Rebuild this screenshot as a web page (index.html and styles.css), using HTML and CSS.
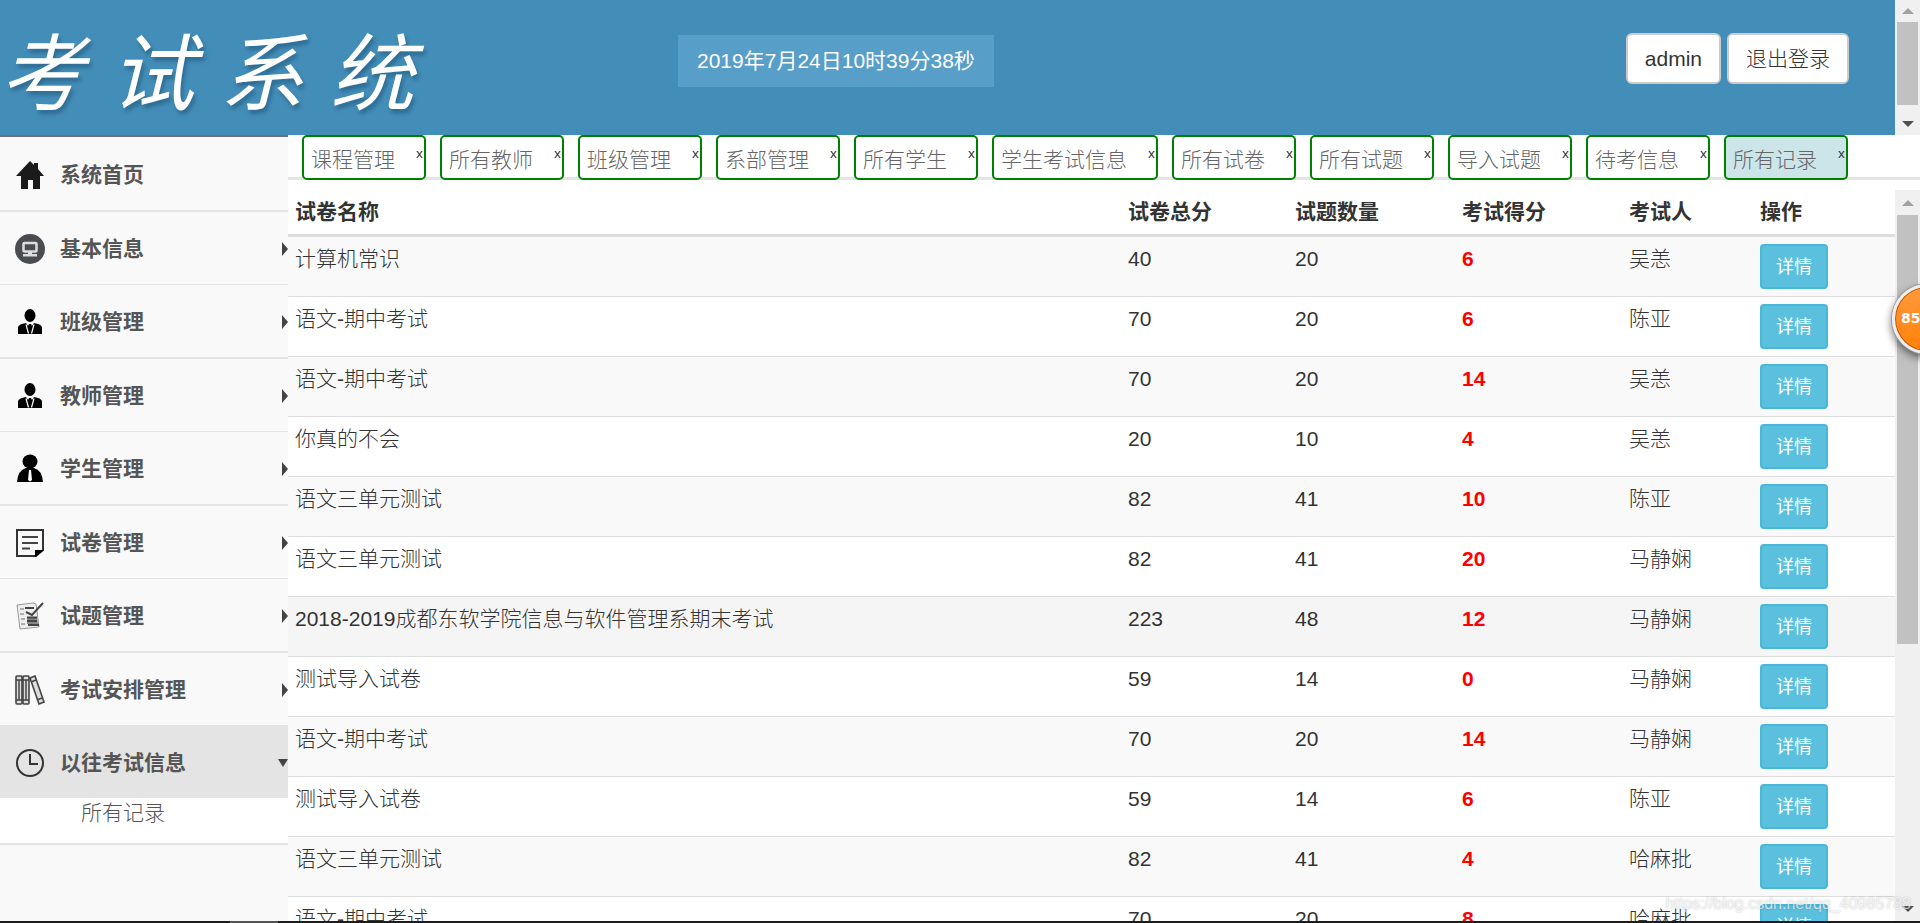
FILE: index.html
```html
<!DOCTYPE html>
<html lang="zh-CN">
<head>
<meta charset="utf-8">
<title>考试系统</title>
<link rel="stylesheet" href="styles.css">
</head>
<body>
<div class="app">
  <header class="header">
    <div class="banner">
      <h1 class="logo"><span>考</span><span>试</span><span>系</span><span>统</span></h1>
      <div class="clock">2019年7月24日10时39分38秒</div>
      <div class="account">
        <button class="btn-plain" type="button">admin</button>
        <button class="btn-plain" type="button">退出登录</button>
      </div>
    </div>
    <div class="scrollbar" aria-hidden="true">
      <span class="sb-arrow sb-up sb-off"></span>
      <span class="sb-track"><span class="sb-thumb sb-thumb-top"></span></span>
      <span class="sb-arrow sb-down"></span>
    </div>
  </header>

  <div class="body">
    <nav class="sidebar">
      <ul class="menu">
        <li><a href="#"><svg class="icon" viewBox="0 0 30 30"><path fill="#1b1b1b" d="M15 1 19 5V3h4v6l6 7h-4v13h-7v-9h-5v9H6V16H1z"/></svg>系统首页</a></li>
        <li class="has-sub"><a href="#"><svg class="icon" viewBox="0 0 30 30"><circle cx="15" cy="15" r="15" fill="#4a4c50"/><rect x="8.500" y="9" width="13" height="8.500" rx="1" fill="none" stroke="#ddd" stroke-width="2.500"/><path fill="#ddd" d="M13 18h4v2h5v2.500H8V20h5z"/></svg>基本信息</a></li>
        <li class="has-sub"><a href="#"><svg class="icon" viewBox="0 0 30 30"><ellipse cx="15" cy="8.500" rx="5.500" ry="6.500"/><path d="M3 27v-7q1-3 8-4l2 3 1-2h2l1 2 2-3q7 1 8 4v7z"/><path stroke="#fff" stroke-width="1.200" fill="none" d="M11 17.500l2.500 9M19 17.500l-2.500 9"/></svg>班级管理</a></li>
        <li class="has-sub"><a href="#"><svg class="icon" viewBox="0 0 30 30"><ellipse cx="15" cy="8.500" rx="5.500" ry="6.500"/><path d="M3 27v-7q1-3 8-4l2 3 1-2h2l1 2 2-3q7 1 8 4v7z"/><path stroke="#fff" stroke-width="1.200" fill="none" d="M11 17.500l2.500 9M19 17.500l-2.500 9"/></svg>教师管理</a></li>
        <li class="has-sub"><a href="#"><svg class="icon" viewBox="0 0 30 30"><ellipse cx="15" cy="7.500" rx="7.500" ry="7"/><path d="M2 28q1-12 9-14h8q8 2 9 14z"/><path fill="#fff" d="M14 16h2l1 10-2 1.500-2-1.500z"/></svg>学生管理</a></li>
        <li class="has-sub"><a href="#"><svg class="icon" viewBox="0 0 30 30"><path fill="none" stroke="#333" stroke-width="2" d="M2 2h26v20l-7 6H2z"/><path d="M20 29v-7h9z"/><path stroke="#444" stroke-width="1.800" d="M7 9h16M7 15h16M7 20.500h8"/></svg>试卷管理</a></li>
        <li class="has-sub"><a href="#"><svg class="icon" viewBox="0 0 30 30"><path fill="#eee" stroke="#999" d="M2 4 18 2l3 1 3 23-19 2z"/><path stroke="#999" stroke-width="1.300" d="M5 8h4M5 13h4M6 18h4M6 23h4"/><path fill="#888" d="M12 16h10l1 7H12z"/><path fill="none" stroke="#444" stroke-width="2" d="M10 7h9M11 11l6 3L28 2M12 16.500h10M12 20h10M13 24h11"/></svg>试题管理</a></li>
        <li class="has-sub"><a href="#"><svg class="icon" viewBox="0 0 30 30"><g fill="#ddd" stroke="#444" stroke-width="1.600"><rect x="1" y="1" width="6" height="28" rx="1"/><rect x="8" y="1" width="6" height="28" rx="1"/><path d="M15 3l5-2 9 26-5 2z"/></g><path stroke="#444" stroke-width="1.500" d="M1 5h13M1 25h13M16 7l5-2M22 25l5-2M4 5v20M11 5v20"/></svg>考试安排管理</a></li>
        <li class="has-sub open"><a href="#"><svg class="icon" viewBox="0 0 30 30"><circle cx="15" cy="15" r="13" fill="none" stroke="#333" stroke-width="2"/><path fill="none" stroke="#333" stroke-width="2" d="M15 6v10h8"/></svg>以往考试信息</a>
          <ul class="submenu"><li><a href="#">所有记录</a></li></ul>
        </li>
      </ul>
    </nav>

    <main class="main">
      <div class="tabs">
        <div class="tab"><a href="#">课程管理</a><button type="button">x</button></div>
        <div class="tab"><a href="#">所有教师</a><button type="button">x</button></div>
        <div class="tab"><a href="#">班级管理</a><button type="button">x</button></div>
        <div class="tab"><a href="#">系部管理</a><button type="button">x</button></div>
        <div class="tab"><a href="#">所有学生</a><button type="button">x</button></div>
        <div class="tab"><a href="#">学生考试信息</a><button type="button">x</button></div>
        <div class="tab"><a href="#">所有试卷</a><button type="button">x</button></div>
        <div class="tab"><a href="#">所有试题</a><button type="button">x</button></div>
        <div class="tab"><a href="#">导入试题</a><button type="button">x</button></div>
        <div class="tab"><a href="#">待考信息</a><button type="button">x</button></div>
        <div class="tab current"><a href="#">所有记录</a><button type="button">x</button></div>
      </div>
      <div class="frame">
        <div class="table-wrap">
          <table class="records">
            <colgroup><col><col class="c-num"><col class="c-num"><col class="c-num"><col class="c-who"><col class="c-act"></colgroup>
            <thead><tr><th>试卷名称</th><th>试卷总分</th><th>试题数量</th><th>考试得分</th><th>考试人</th><th>操作</th></tr></thead>
            <tbody>
              <tr><td>计算机常识</td><td>40</td><td>20</td><td class="score">6</td><td>吴恙</td><td><button class="btn-info" type="button">详情</button></td></tr>
              <tr><td>语文-期中考试</td><td>70</td><td>20</td><td class="score">6</td><td>陈亚</td><td><button class="btn-info" type="button">详情</button></td></tr>
              <tr><td>语文-期中考试</td><td>70</td><td>20</td><td class="score">14</td><td>吴恙</td><td><button class="btn-info" type="button">详情</button></td></tr>
              <tr><td>你真的不会</td><td>20</td><td>10</td><td class="score">4</td><td>吴恙</td><td><button class="btn-info" type="button">详情</button></td></tr>
              <tr><td>语文三单元测试</td><td>82</td><td>41</td><td class="score">10</td><td>陈亚</td><td><button class="btn-info" type="button">详情</button></td></tr>
              <tr><td>语文三单元测试</td><td>82</td><td>41</td><td class="score">20</td><td>马静娴</td><td><button class="btn-info" type="button">详情</button></td></tr>
              <tr class="hovered"><td>2018-2019成都东软学院信息与软件管理系期末考试</td><td>223</td><td>48</td><td class="score">12</td><td>马静娴</td><td><button class="btn-info" type="button">详情</button></td></tr>
              <tr><td>测试导入试卷</td><td>59</td><td>14</td><td class="score">0</td><td>马静娴</td><td><button class="btn-info" type="button">详情</button></td></tr>
              <tr><td>语文-期中考试</td><td>70</td><td>20</td><td class="score">14</td><td>马静娴</td><td><button class="btn-info" type="button">详情</button></td></tr>
              <tr><td>测试导入试卷</td><td>59</td><td>14</td><td class="score">6</td><td>陈亚</td><td><button class="btn-info" type="button">详情</button></td></tr>
              <tr><td>语文三单元测试</td><td>82</td><td>41</td><td class="score">4</td><td>哈麻批</td><td><button class="btn-info" type="button">详情</button></td></tr>
              <tr><td>语文-期中考试</td><td>70</td><td>20</td><td class="score">8</td><td>哈麻批</td><td><button class="btn-info" type="button">详情</button></td></tr>
            </tbody>
          </table>
        </div>
        <div class="scrollbar" aria-hidden="true">
          <span class="sb-arrow sb-up sb-off"></span>
          <span class="sb-track"><span class="sb-thumb sb-thumb-main"></span></span>
          <span class="sb-arrow sb-down"></span>
        </div>
      </div>
    </main>
  </div>
  <div class="taskbar"><span></span></div>
  <div class="badge">85</div>
  <div class="watermark">https://blog.csdn.net/qq_40985788</div>
</div>
</body>
</html>
```
FILE: styles.css
```css
* { box-sizing: border-box; }
html, body { height: 100%; }
body {
  margin: 0;
  font: 300 21px/30px "Liberation Sans", "Noto Sans CJK SC", sans-serif;
  color: #333;
  background: #fff;
  overflow: hidden;
}
ul { list-style: none; margin: 0; padding: 0; }
a { color: inherit; text-decoration: none; }
button { font: inherit; color: inherit; cursor: pointer; }

.app { position: relative; height: 100vh; display: flex; flex-direction: column; overflow: hidden; }

/* Header */
.header { display: flex; flex: none; height: 135px; }
.banner {
  flex: 1;
  display: grid;
  grid-template-columns: 678px auto 1fr;
  align-items: start;
  background: #438eb9;
}
.logo {
  display: flex;
  gap: 26px;
  margin: 0;
  padding-top: 24px;
  font: italic 400 84px/88px "Noto Sans CJK SC", sans-serif;
  color: #fff;
  text-shadow: 2px 4px 4px rgba(0, 40, 70, .35);
}
.clock {
  margin-top: 35px;
  padding: 11px 19px;
  background: #579ec8;
  color: #fff;
  font-weight: 400;
}
.account { display: flex; gap: 6px; justify-content: flex-end; padding: 33px 46px 0 0; }
.btn-plain {
  height: 51px;
  padding: 0 17px;
  border: 2px solid #ccc;
  border-radius: 6px;
  background: #fff;
}

/* Scrollbars */
.scrollbar { flex: none; width: 25px; background: #f0f0f0; display: flex; flex-direction: column; padding: 0 2px; }
.sb-arrow { height: 25px; display: flex; align-items: center; justify-content: center; }
.header .sb-arrow { height: 22px; }
.sb-arrow::before { content: ""; border: 6px solid transparent; }
.sb-up::before { border-top: 0; border-bottom-color: #505050; }
.sb-down::before { border-bottom: 0; border-top-color: #505050; }
.sb-off::before { border-bottom-color: #a3a3a3; }
.sb-track { flex: 1; }
.sb-thumb { display: block; background: #c1c1c1; }
.sb-thumb-top { height: 91%; }
.sb-thumb-main { height: 63%; }

/* Layout */
.body { flex: 1; display: flex; min-height: 0; }

/* Sidebar */
.sidebar { flex: none; width: 288px; background: #f9f9f9; border-top: 2px solid #6b6f78; overflow: hidden; }
.menu > li { border-bottom: 1px solid #e4e4e4; }
.menu > li:nth-child(odd) { border-bottom-width: 2px; }
.menu > li > a {
  display: flex;
  align-items: center;
  gap: 15px;
  height: 72px;
  padding: 2px 0 0 15px;
  font-weight: 700;
  color: #555;
}
.menu > li:first-child { padding-top: 1px; }
.icon { width: 30px; height: 30px; flex: none; }
.has-sub > a::after {
  content: "";
  margin-left: auto;
  border: 7px solid transparent;
  border-left: 6px solid #444;
  border-right: 0;
}
.menu > .open > a { background: #e4e4e4; }
.open > a::after { border: 5px solid transparent; border-top: 8px solid #444; border-bottom: 0; }
.submenu { background: #fff; height: 45px; padding-left: 81px; color: #555; }

/* Tabs */
.main { flex: 1; min-width: 0; display: flex; flex-direction: column; }
.tabs {
  flex: none;
  height: 45px;
  display: flex;
  gap: 14px;
  padding-left: 14px;
  background: linear-gradient(#e4e4e4, #e4e4e4) bottom / 100% 3px no-repeat #fff;
}
.tab {
  flex: none;
  display: flex;
  justify-content: space-between;
  gap: 20px;
  padding-left: 7px;
  border: 2px solid #008000;
  border-radius: 5px;
  background: #fff;
  color: #666;
}
.tab a { padding-top: 8px; }
.tab button { width: 9px; height: 32px; padding: 0; border: 0; background: none; font: 400 13px/32px "Noto Sans", sans-serif; color: #333; }
.tab.current { background: #cce5e8; }

/* Records */
.frame { flex: 1; min-height: 0; display: flex; margin-top: 10px; }
.table-wrap { flex: 1; overflow: hidden; }
.records { width: 100%; table-layout: fixed; border-spacing: 0; }
.c-num { width: 167px; }
.c-who { width: 131px; }
.c-act { width: 142px; }
.records th, .records td { padding: 7px; text-align: left; vertical-align: top; }
.records th { border-bottom: 3px solid #ddd; font-weight: 700; }
.records td { border-top: 1px solid #ddd; }
.records tbody tr:first-child td { border-top: 0; }
.records tbody tr:nth-child(odd) { background: #f9f9f9; }
.records tbody tr.hovered { background: #f5f5f5; }
.records .score { color: #f00; font-weight: 700; }
.btn-info {
  display: block;
  height: 45px;
  padding: 0 14px;
  border: 2px solid #46b8da;
  border-radius: 4px;
  background: #5bc0de;
  color: #fff;
  font-size: 18px;
  font-weight: 400;
}

/* Overlays */
.taskbar { flex: none; height: 2px; background: #1c1c1c; }
.taskbar span { display: block; width: 48px; height: 2px; margin-left: 230px; background: #555; }
.badge {
  position: absolute;
  top: 284px;
  right: -42px;
  width: 70px;
  height: 70px;
  padding-left: 6px;
  border: 3px solid #eee;
  border-radius: 50%;
  background: linear-gradient(#ff9a3c, #ff8108);
  box-shadow: inset 0 0 0 1px #c8500a, 0 0 0 1px #999, 0 4px 10px rgba(0, 0, 0, .6);
  color: #fff;
  font: 700 14px/62px "DejaVu Sans", sans-serif;
}
.watermark {
  position: absolute;
  right: 9px;
  bottom: 7px;
  font-size: 16px;
  line-height: 24px;
  color: rgba(255, 255, 255, .7);
  text-shadow: 0 0 2px rgba(0, 0, 0, .25);
}
```
